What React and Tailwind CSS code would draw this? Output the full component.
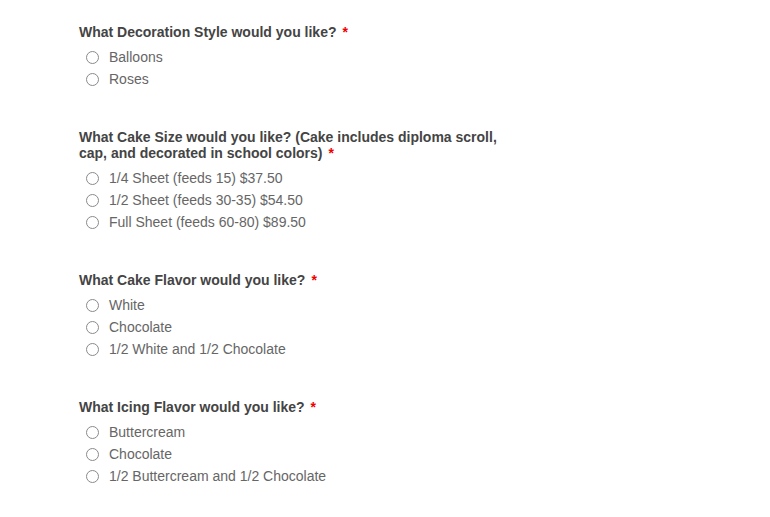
import React from 'react'

const questions = [
  {
    title: 'What Decoration Style would you like?',
    name: 'decoration',
    options: ['Balloons', 'Roses'],
  },
  {
    title: 'What Cake Size would you like? (Cake includes diploma scroll, cap, and decorated in school colors)',
    name: 'size',
    options: ['1/4 Sheet (feeds 15) $37.50', '1/2 Sheet (feeds 30-35) $54.50', 'Full Sheet (feeds 60-80) $89.50'],
  },
  {
    title: 'What Cake Flavor would you like?',
    name: 'flavor',
    options: ['White', 'Chocolate', '1/2 White and 1/2 Chocolate'],
  },
  {
    title: 'What Icing Flavor would you like?',
    name: 'icing',
    options: ['Buttercream', 'Chocolate', '1/2 Buttercream and 1/2 Chocolate'],
  },
]

const Question = ({ title, name, options }) => (
  <fieldset className="mb-[39px]">
    <legend className="w-[440px] text-[14px] leading-[16px] font-bold text-[#444]">
      {title}
      <span className="ml-[6px] text-[#e00]">*</span>
    </legend>
    <ul className="mt-[6px]">
      {options.map((opt) => (
        <li key={opt} className="flex h-[22px] items-center">
          <label className="flex items-center">
            <input
              type="radio"
              name={name}
              className="ml-[7px] mr-[10px] h-[13px] w-[13px] appearance-none rounded-full border border-[#8a8a8a] bg-white"
            />
            <span className="text-[14px] text-[#666]">{opt}</span>
          </label>
        </li>
      ))}
    </ul>
  </fieldset>
)

const App = () => (
  <div className="min-h-[517px] bg-white pt-[24px] pl-[79px]" style={{ fontFamily: '"Liberation Sans", Arial, sans-serif' }}>
    {questions.map((q) => (
      <Question key={q.name} {...q} />
    ))}
  </div>
)

export default App
